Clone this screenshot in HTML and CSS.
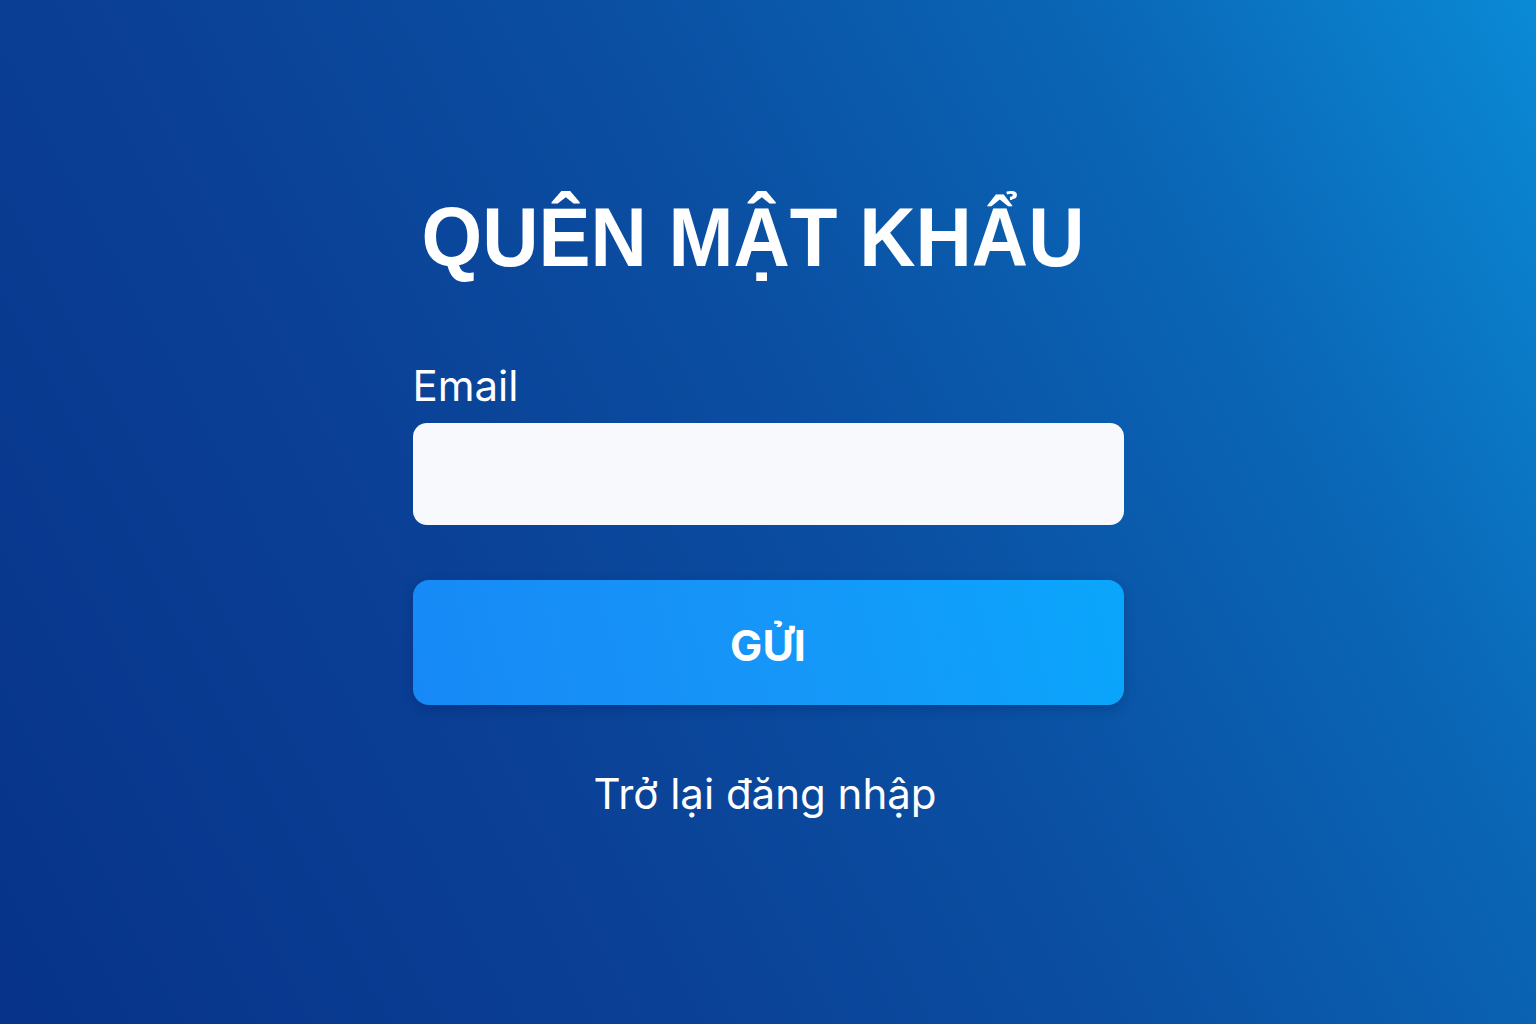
FILE: index.html
```html
<!DOCTYPE html>
<html lang="vi">
<head>
<meta charset="utf-8">
<title>Quên mật khẩu</title>
<link rel="stylesheet" href="styles.css">
</head>
<body>
<main class="page">
  <form class="card">
    <h1 class="title">QUÊN MẬT KHẨU</h1>
    <label class="label" for="email">Email</label>
    <input class="input" id="email" type="email">
    <button class="btn" type="button">GỬI</button>
    <a class="back" href="#">Trở lại đăng nhập</a>
  </form>
</main>
</body>
</html>
```

FILE: styles.css
```css
html, body {
  margin: 0;
  padding: 0;
}
body {
  width: 1536px;
  height: 1024px;
  overflow: hidden;
  background: linear-gradient(62deg, #07338a 0%, #0a3f95 30%, #0a4fa2 55%, #0a66b6 78%, #0a8ad5 100%);
  font-family: "Inter", "Liberation Sans", sans-serif;
  color: #ffffff;
}
.page {
  display: flex;
  justify-content: center;
}
.card {
  width: 711px;
  display: flex;
  flex-direction: column;
  padding-top: 192px;
}
.title {
  margin: 0 0 79px -30px;
  font-family: "Liberation Sans", Arial, sans-serif;
  font-weight: 700;
  font-size: 78px;
  line-height: 90px;
  text-align: center;
  color: #ffffff;
  transform: scaleY(1.06);
}
.label {
  font-size: 42px;
  line-height: 50px;
  margin-bottom: 12px;
}
.input {
  height: 102px;
  border: none;
  border-radius: 14px;
  background: #f8f9fc;
  padding: 0 24px;
  box-sizing: border-box;
  font-size: 32px;
  margin: 0 0 55px 0;
  outline: none;
}
.btn {
  height: 125px;
  border: none;
  border-radius: 16px;
  background: linear-gradient(75deg, #1689f6 0%, #1696f8 50%, #0aa6fc 100%);
  color: #ffffff;
  font-family: "Inter", "Liberation Sans", sans-serif;
  font-weight: 700;
  font-size: 43px;
  margin: 0 0 64px 0;
  padding: 4px 0 0 0;
  box-shadow: 0 4px 12px rgba(0, 20, 80, 0.25);
}
.back {
  align-self: center;
  color: #ffffff;
  text-decoration: none;
  font-size: 42px;
  line-height: 50px;
  margin-left: -6px;
}
```
